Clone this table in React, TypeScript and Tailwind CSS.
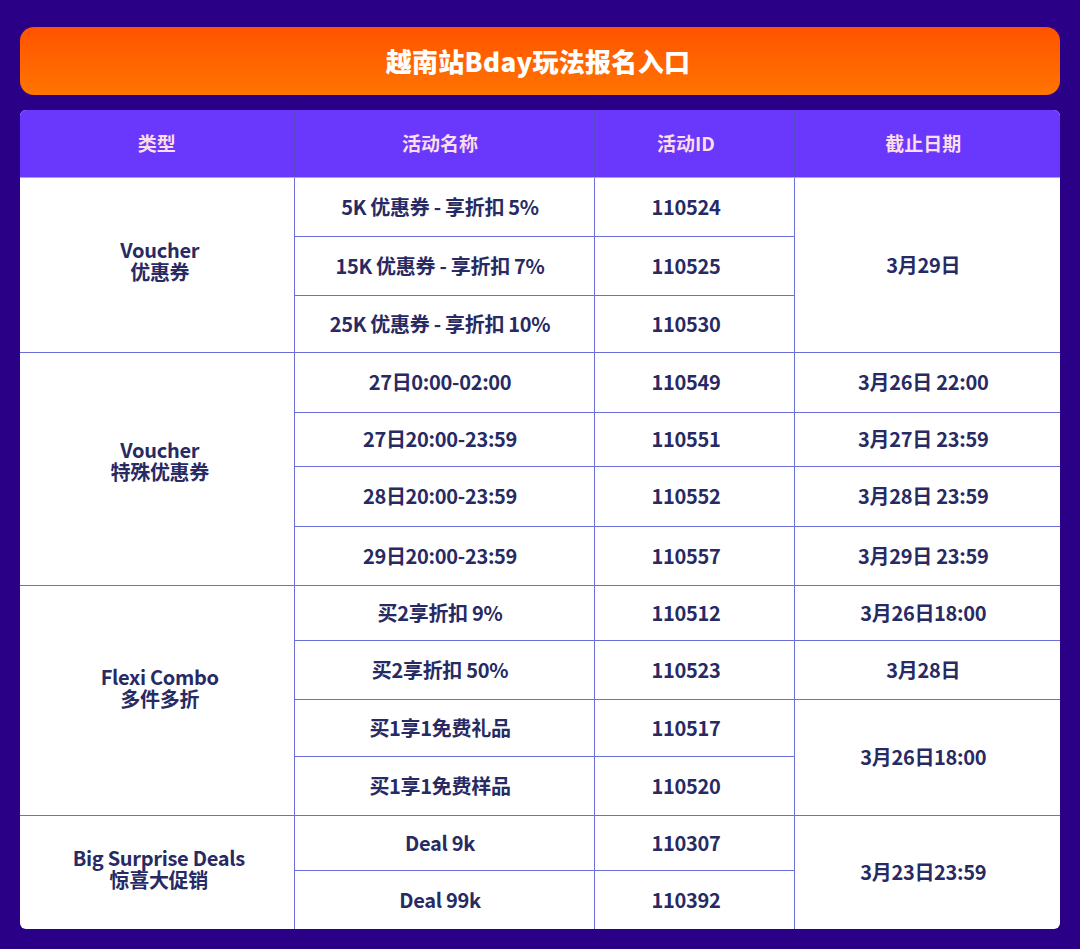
import React from 'react';

type Cell = { text: React.ReactNode; rowSpan?: number; right?: boolean; bottom?: boolean; pad?: string };

const font = { fontFamily: '"Noto Sans CJK SC", "Noto Sans", sans-serif' };

// each row: height + the cells that start in it
const rows: { h: string; cells: Cell[] }[] = [
  {
    h: 'h-[59px]',
    cells: [
      { text: <>Voucher<br />优惠券</>, rowSpan: 3, right: true, bottom: true, pad: 'pb-[8px] pl-[6px]' },
      { text: '5K 优惠券 - 享折扣 5%', right: true, bottom: true },
      { text: '110524', right: true, bottom: true },
      { text: '3月29日', rowSpan: 3, bottom: true },
    ],
  },
  { h: 'h-[59px]', cells: [{ text: '15K 优惠券 - 享折扣 7%', right: true, bottom: true }, { text: '110525', right: true, bottom: true }] },
  { h: 'h-[57px]', cells: [{ text: '25K 优惠券 - 享折扣 10%', right: true, bottom: true }, { text: '110530', right: true, bottom: true }] },
  {
    h: 'h-[60px]',
    cells: [
      { text: <>Voucher<br />特殊优惠券</>, rowSpan: 4, right: true, bottom: true, pad: 'pb-[16px] pl-[6px]' },
      { text: '27日0:00-02:00', right: true, bottom: true },
      { text: '110549', right: true, bottom: true },
      { text: '3月26日 22:00', bottom: true },
    ],
  },
  { h: 'h-[54px]', cells: [{ text: '27日20:00-23:59', right: true, bottom: true }, { text: '110551', right: true, bottom: true }, { text: '3月27日 23:59', bottom: true }] },
  { h: 'h-[60px]', cells: [{ text: '28日20:00-23:59', right: true, bottom: true }, { text: '110552', right: true, bottom: true }, { text: '3月28日 23:59', bottom: true }] },
  { h: 'h-[59px]', cells: [{ text: '29日20:00-23:59', right: true, bottom: true }, { text: '110557', right: true, bottom: true }, { text: '3月29日 23:59', bottom: true }] },
  {
    h: 'h-[55px]',
    cells: [
      { text: <>Flexi Combo<br />多件多折</>, rowSpan: 4, right: true, bottom: true, pad: 'pb-[24px] pl-[6px]' },
      { text: '买2享折扣 9%', right: true, bottom: true },
      { text: '110512', right: true, bottom: true },
      { text: '3月26日18:00', bottom: true },
    ],
  },
  { h: 'h-[59px]', cells: [{ text: '买2享折扣 50%', right: true, bottom: true }, { text: '110523', right: true, bottom: true }, { text: '3月28日', bottom: true }] },
  {
    h: 'h-[57px]',
    cells: [
      { text: '买1享1免费礼品', right: true, bottom: true },
      { text: '110517', right: true, bottom: true },
      { text: '3月26日18:00', rowSpan: 2, bottom: true },
    ],
  },
  { h: 'h-[59px]', cells: [{ text: '买1享1免费样品', right: true, bottom: true }, { text: '110520', right: true, bottom: true }] },
  {
    h: 'h-[55px]',
    cells: [
      { text: <>Big Surprise Deals<br />惊喜大促销</>, rowSpan: 2, right: true, pad: 'pb-[6px] pl-[4px]' },
      { text: 'Deal 9k', right: true, bottom: true },
      { text: '110307', right: true, bottom: true },
      { text: '3月23日23:59', rowSpan: 2 },
    ],
  },
  { h: 'h-[59px]', cells: [{ text: 'Deal 99k', right: true }, { text: '110392', right: true }] },
];

const headers = ['类型', '活动名称', '活动ID', '截止日期'];

// columns after the first sit a touch left of centre in the reference
const colPad = ['', 'pr-[8px]', 'pr-[16px]', 'pr-[8px]'];

export default function App() {
  return (
    <div className="min-h-screen w-[1080px] bg-[#2a0086] px-5 pt-[27px] pb-5" style={font}>
      <div className="h-[68px] rounded-[14px] bg-gradient-to-b from-[#ff5200] to-[#ff7400] flex items-center justify-center">
        <h1 className="text-white text-[26px] font-black tracking-[0.3px] pb-[2px] pr-[4px]">越南站Bday玩法报名入口</h1>
      </div>

      <div className="mt-[15px] rounded-[6px] overflow-hidden bg-white">
        <table className="w-[1040px] table-fixed border-collapse text-center">
          <colgroup>
            <col className="w-[274px]" />
            <col className="w-[300px]" />
            <col className="w-[200px]" />
            <col className="w-[266px]" />
          </colgroup>
          <thead>
            <tr className="h-[67px] bg-[#6a38fd]">
              {headers.map((h, i) => (
                <th
                  key={h}
                  className={`text-[19px] font-bold text-[#fadde7] border-b border-b-[#a99cf5] ${colPad[i]} ${i < 3 ? 'border-r border-r-[#5646cc]' : ''}`}
                >
                  {h}
                </th>
              ))}
            </tr>
          </thead>
          <tbody>
            {rows.map((r, ri) => (
              <tr key={ri} className={r.h}>
                {r.cells.map((c, ci) => {
                  // work out which column the cell is in: rows with fewer cells are missing the spanned leading/trailing ones
                  const col = r.cells.length === 4 ? ci : r.cells.length === 3 ? ci + 1 : ci + 1;
                  return (
                    <td
                      key={ci}
                      rowSpan={c.rowSpan}
                      className={`p-0 align-middle text-[20px] leading-[22px] font-bold text-[#272a63] tracking-[-0.3px] ${
                        c.pad ?? colPad[col]
                      } ${c.right ? 'border-r-[1.5px] border-r-[#6b6fd8]' : ''} ${
                        c.bottom ? 'border-b-[1.5px] border-b-[#6b6fd8]' : ''
                      }`}
                    >
                      {c.text}
                    </td>
                  );
                })}
              </tr>
            ))}
          </tbody>
        </table>
      </div>
    </div>
  );
}
